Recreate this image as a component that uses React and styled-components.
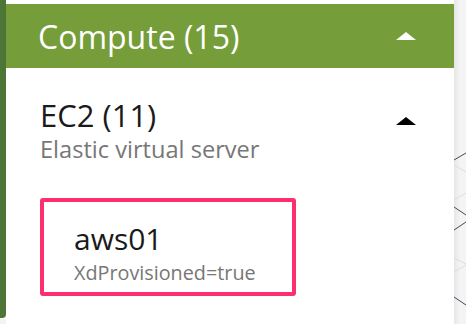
import React from 'react';
import styled, { createGlobalStyle } from 'styled-components';

const GlobalStyle = createGlobalStyle`
  html, body {
    margin: 0;
    padding: 0;
    background: #f4f4f4;
  }
  body {
    font-family: 'Open Sans', 'Liberation Sans', sans-serif;
  }
`;

const Layout = styled.div`
  display: flex;
  width: 466px;
  height: 324px;
  overflow: hidden;
  background: #f4f4f4;
`;

const Rail = styled.div`
  width: 6px;
  height: 318px;
  background: #4d7535;
  border-bottom-right-radius: 4px;
  flex-shrink: 0;
`;

const Panel = styled.div`
  width: 448px;
  flex-shrink: 0;
  background: #fff;
  padding-top: 4px;
  display: flex;
  flex-direction: column;
`;

const GroupHeader = styled.div`
  height: 64px;
  background: #759d39;
  color: #fff;
  display: flex;
  align-items: center;
  justify-content: space-between;
  padding: 0 38px 0 32px;
  font-size: 32px;
`;

const Caret = styled.span`
  display: block;
  width: 0;
  height: 0;
  border-left: 10px solid transparent;
  border-right: 10px solid transparent;
  border-bottom: 8px solid ${(p) => p.color};
`;

const Service = styled.div`
  display: flex;
  justify-content: space-between;
  align-items: flex-start;
  padding: 29px 38px 0 34px;
`;

const ServiceName = styled.div`
  font-size: 31px;
  line-height: 36px;
  color: #1a1a1a;
`;

const ServiceDesc = styled.div`
  font-size: 23.6px;
  line-height: 32px;
  color: #777;
`;

const ServiceCaret = styled.div`
  padding-top: 20px;
`;

const Instance = styled.div`
  margin: 33px 0 0 34px;
  width: 256px;
  height: 98px;
  box-sizing: border-box;
  border: 4px solid #fe2f6e;
  border-radius: 3px;
  padding: 19px 0 0 30px;
`;

const InstanceName = styled.div`
  font-size: 30px;
  line-height: 36px;
  color: #1a1a1a;
`;

const InstanceTag = styled.div`
  font-size: 19.8px;
  line-height: 32px;
  color: #777;
`;

const Canvas = styled.div`
  flex: 1;
  position: relative;
  background: linear-gradient(to right, #e6e6e6, #f4f4f4 6px);
`;

const Edges = styled.svg`
  position: absolute;
  inset: 0;
`;

const edges = [
  { y1: 160, y2: 153, dark: true },
  { y1: 165, y2: 172 },
  { y1: 200, y2: 193 },
  { y1: 207, y2: 215, dark: true },
  { y1: 230, y2: 222, dark: true },
  { y1: 258, y2: 264 },
  { y1: 272, y2: 265 },
  { y1: 297, y2: 305, dark: true },
];

export default function App() {
  return (
    <>
      <GlobalStyle />
      <Layout>
        <Rail />
        <Panel>
          <GroupHeader>
            <span>Compute (15)</span>
            <Caret color="#fff" />
          </GroupHeader>
          <Service>
            <div>
              <ServiceName>EC2 (11)</ServiceName>
              <ServiceDesc>Elastic virtual server</ServiceDesc>
            </div>
            <ServiceCaret>
              <Caret color="#000" />
            </ServiceCaret>
          </Service>
          <Instance>
            <InstanceName>aws01</InstanceName>
            <InstanceTag>XdProvisioned=true</InstanceTag>
          </Instance>
        </Panel>
        <Canvas>
          <Edges width="12" height="324">
            {edges.map((e, i) => (
              <line
                key={i}
                x1="0"
                y1={e.y1}
                x2="12"
                y2={e.y2}
                stroke={e.dark ? '#3d4b5c' : '#dcdcdc'}
                strokeWidth="1"
              />
            ))}
          </Edges>
        </Canvas>
      </Layout>
    </>
  );
}
